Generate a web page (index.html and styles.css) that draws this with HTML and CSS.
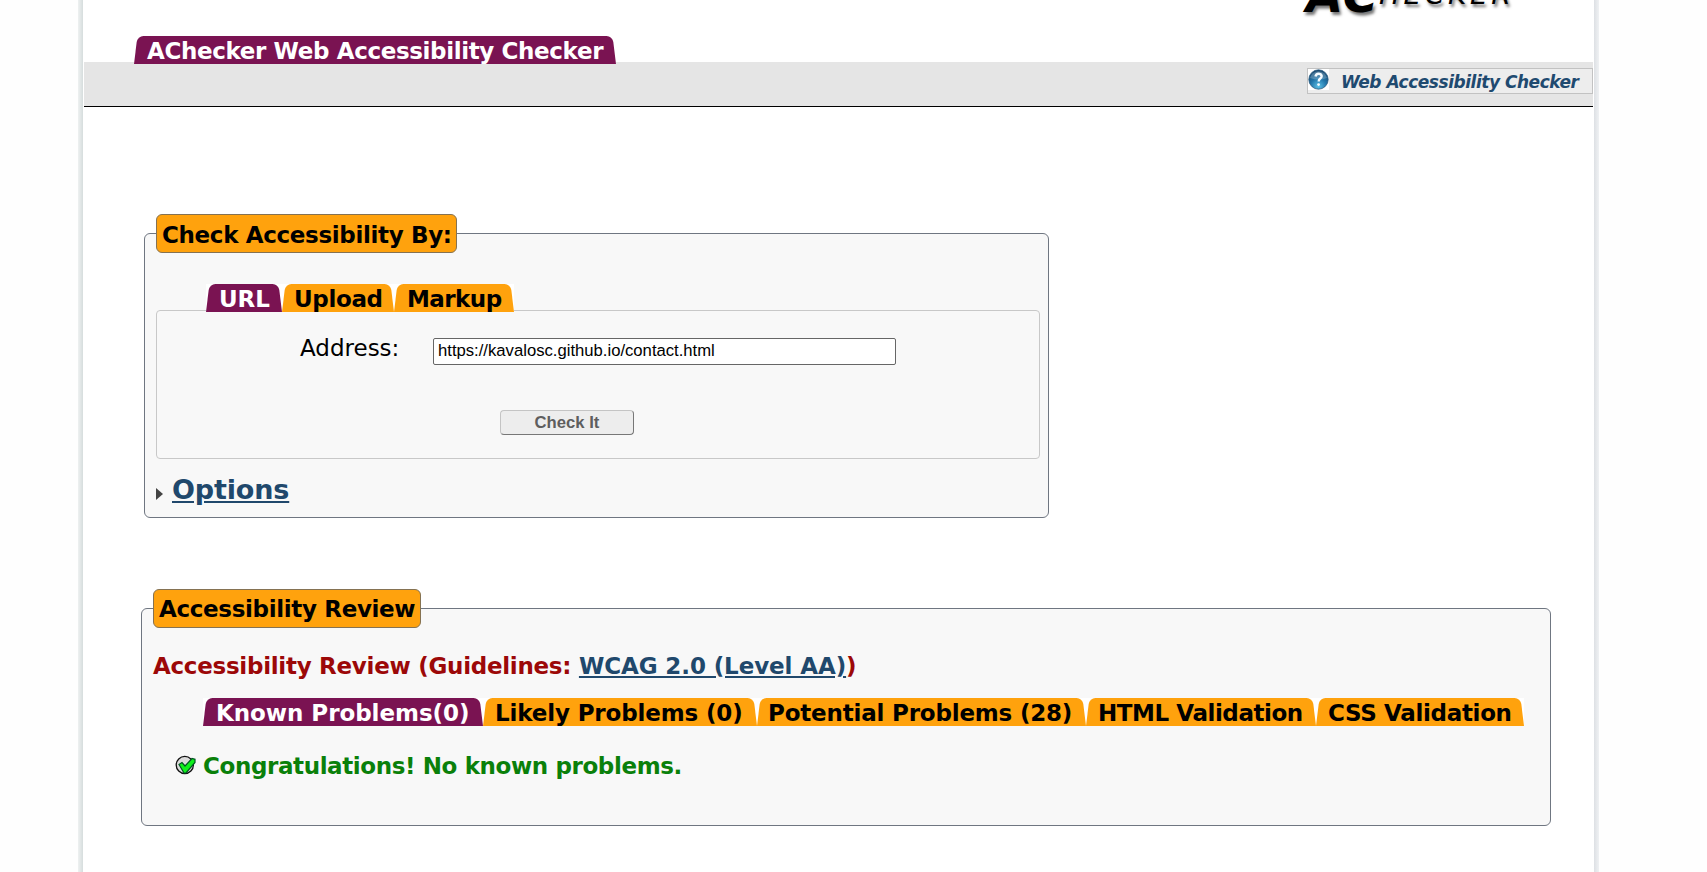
FILE: index.html
```html
<!DOCTYPE html>
<html lang="en">
<head>
<meta charset="utf-8">
<title>AChecker Web Accessibility Checker</title>
<link rel="stylesheet" href="styles.css">
</head>
<body>
<div class="page">
  <header class="header">
    <div class="logo"><span class="logo-big">AC</span><span class="logo-small">HECKER</span></div>
    <h1 class="tab active title-tab"><span>AChecker Web Accessibility Checker</span></h1>
  </header>
  <div class="bar">
    <a class="crumb">
      <svg class="help" viewBox="0 0 21 21" width="21" height="21">
        <defs><radialGradient id="orb" cx="50%" cy="85%" r="80%"><stop offset="0" stop-color="#5cc0e6"/><stop offset=".5" stop-color="#2277ab"/><stop offset="1" stop-color="#16476f"/></radialGradient></defs>
        <rect width="21" height="21" fill="#fff"/>
        <circle cx="10.5" cy="10.5" r="9.7" fill="url(#orb)" stroke="#2c5c80" stroke-width=".8"/>
        <path d="M2 9a8.6 8 0 0 1 17 0q-8 3-17 0z" fill="#fff" opacity=".22"/>
        <path d="M7.500 7.500q.4-2.800 3-2.800t3.200 2.400q0 1.600-1.700 2.700-1.300 1-1.300 2.600" fill="none" stroke="#f4fbff" stroke-width="2.400"/>
        <circle cx="10.600" cy="15.600" r="1.400" fill="#f4fbff"/>
      </svg>
      <span>Web Accessibility Checker</span>
    </a>
  </div>
  <main class="main">
    <section class="box check-box">
      <h2 class="legend legend-check"><span>Check Accessibility By:</span></h2>
      <nav class="tabs">
        <a class="tab active t-url"><span>URL</span></a>
        <a class="tab t-upload"><span>Upload</span></a>
        <a class="tab t-markup"><span>Markup</span></a>
      </nav>
      <form class="panel">
        <div class="row">
          <label class="address" for="uri">Address:</label>
          <input class="uri" id="uri" type="text" value="https://kavalosc.github.io/contact.html">
        </div>
        <button class="submit" type="button">Check It</button>
      </form>
      <div class="options">
        <svg class="arrow" width="8" height="12" viewBox="0 0 8 12"><path d="M0 0l7 6-7 6z" fill="#444"/></svg>
        <a class="link">Options</a>
      </div>
    </section>
    <section class="box review-box">
      <h2 class="legend legend-review"><span>Accessibility Review</span></h2>
      <h3 class="guide">Accessibility Review (Guidelines: <a class="link level">WCAG 2.0 (Level AA)</a>)</h3>
      <nav class="tabs review-tabs">
        <a class="tab active t-known"><span>Known Problems(0)</span></a>
        <a class="tab t-likely"><span>Likely Problems (0)</span></a>
        <a class="tab t-potential"><span>Potential Problems (28)</span></a>
        <a class="tab t-html"><span>HTML Validation</span></a>
        <a class="tab t-css"><span>CSS Validation</span></a>
      </nav>
      <div class="congrats">
        <svg class="check" width="21" height="20" viewBox="0 0 21 20">
          <circle cx="9.800" cy="10" r="8.600" fill="#dcdcdc" stroke="#111" stroke-width="1.300"/>
          <path d="M4 9.500l3-2 3 3.500 7-7.500 3 .8v3.200l-9 10.500h-2z" fill="#10f01c" stroke="#052" stroke-width="1.200"/>
        </svg>
        <span>Congratulations! No known problems.</span>
      </div>
    </section>
  </main>
</div>
</body>
</html>
```
FILE: styles.css
```css
* { box-sizing: border-box; }
html, body { height: 100%; overflow: hidden; }
body { margin: 0; background: #fefefe; font-family: "DejaVu Sans", sans-serif; }
.page {
  width: 1521px; height: 872px; margin-left: 78px; padding: 0 6px; overflow: hidden;
  background:
    linear-gradient(to right, #eef1f1, #d6dddd) left / 5px 100% no-repeat,
    linear-gradient(to left, #eff1f3, #dde0e4) right / 5px 100% no-repeat,
    #fff;
}
.header { position: relative; z-index: 1; height: 62px; padding-left: 50px; display: flex; flex-direction: column; }
.logo {
  flex: none; height: 36px; padding-left: 1172px; display: flex; align-items: flex-start; overflow: hidden;
  font-style: italic; color: #000; text-shadow: 2px 3px 3px #777; line-height: 1; white-space: nowrap;
}
.logo-big { font-size: 48px; font-weight: bold; margin-top: -29px; letter-spacing: 1px; }
.logo-small { font-size: 28px; margin-top: -19px; margin-left: 0; letter-spacing: 3.6px; }
.tab {
  position: relative; z-index: 0; display: block; height: 28px; margin: 0; padding-left: 13px;
  font-size: 23px; font-weight: bold; line-height: 30px; white-space: nowrap; color: #000;
  background: #fff; flex: none; overflow: hidden;
}
.tab::before, .tab::after { content: ""; position: absolute; z-index: -1; top: 0; bottom: 0; background: #ffa20d; }
.tab::before {
  left: 0; right: 20px; border-top-left-radius: 6px; transform: skewX(-7deg); transform-origin: bottom left;
}
.tab::after {
  left: 20px; right: 0; border-top-right-radius: 6px; transform: skewX(7deg); transform-origin: bottom right;
}
.tab.active { color: #fff; }
.tab.active::before, .tab.active::after { background: #7a1352; }
.title-tab { width: 482px; letter-spacing: -.37px; }
.bar {
  height: 45px; background: #e5e5e5; border-bottom: 1px solid #000;
  display: flex; justify-content: flex-end; align-items: flex-start; padding-top: 6px;
}
.crumb {
  width: 286px; height: 26px; border: 1px solid #c2c2c2; background: #ededed;
  display: flex; color: #1f4a70; font-size: 17px; font-weight: bold; font-style: italic; line-height: 27px;
  letter-spacing: -.47px; white-space: nowrap;
}
.help { margin-right: 12px; }
.main { padding-top: 126px; }
.box { border: 1px solid #6f7681; border-radius: 6px; background: #f8f8f8; }
.check-box { width: 905px; height: 285px; margin-left: 60px; padding-left: 11px; }
.legend {
  height: 39px; margin: -20px 0 0; padding-left: 5px; border: 1px solid #857252; border-radius: 6px;
  background: #ffa20d; font-size: 23px; font-weight: bold; line-height: 39px; letter-spacing: -.34px;
  white-space: nowrap;
}
.legend-check { width: 301px; line-height: 40px; }
.legend-review { width: 268px; }
.tabs { display: flex; margin: 31px 0 0 50px; position: relative; }
.t-url { width: 76px; letter-spacing: -.1px; }
.t-upload { width: 112px; padding-left: 12px; letter-spacing: -.35px; }
.t-markup { width: 120px; letter-spacing: -.55px; }
.panel {
  width: 884px; height: 149px; margin-top: -2px; border: 1px solid #c8c8c8; border-radius: 4px;
  padding: 27px 0 0 143px;
}
.row { display: flex; }
.address { width: 133px; font-size: 23px; line-height: 28px; margin-top: -4px; }
.uri {
  width: 463px; height: 27px; border: 1px solid #666; border-radius: 2px; padding: 0 4px 1px;
  background: #fff; color: #000; font: 16.67px "Liberation Sans", sans-serif;
}
.submit {
  display: block; width: 134px; height: 25px; margin: 45px 0 0 200px; padding: 0;
  border: 1px solid #777; border-top-color: #c4c4c4; border-left-color: #c4c4c4; border-radius: 4px;
  background: #ededed; color: #5e5e5e; font: bold 16.67px "Liberation Sans", sans-serif;
}
.options {
  display: flex; margin-top: 14px; font-size: 27px; font-weight: bold; line-height: 34px; letter-spacing: -.15px;
}
.arrow { margin: 15px 8px 0 0; }
.link { color: #20486c; text-decoration: underline; }
.review-box { width: 1410px; height: 218px; margin: 90px 0 0 57px; padding-left: 11px; }
.guide {
  margin: 22px 0 0; font-size: 23px; line-height: 32px; letter-spacing: -.28px; color: #9c0808; white-space: nowrap;
}
.level { letter-spacing: -.1px; }
.review-tabs { margin-top: 16px; }
.t-known { width: 280px; letter-spacing: -.05px; }
.t-likely { width: 274px; padding-left: 12px; letter-spacing: -.15px; }
.t-potential { width: 329px; padding-left: 11px; letter-spacing: -.19px; }
.t-html { width: 230px; padding-left: 12px; letter-spacing: -.44px; }
.t-css { width: 208px; padding-left: 12px; letter-spacing: -.33px; }
.congrats {
  display: flex; margin: 24px 0 0 22px; font-size: 23px; font-weight: bold; line-height: 32px; color: #0a800a;
  letter-spacing: -.39px; white-space: nowrap;
}
.check { margin: 5px 7px 0 0; }
```
